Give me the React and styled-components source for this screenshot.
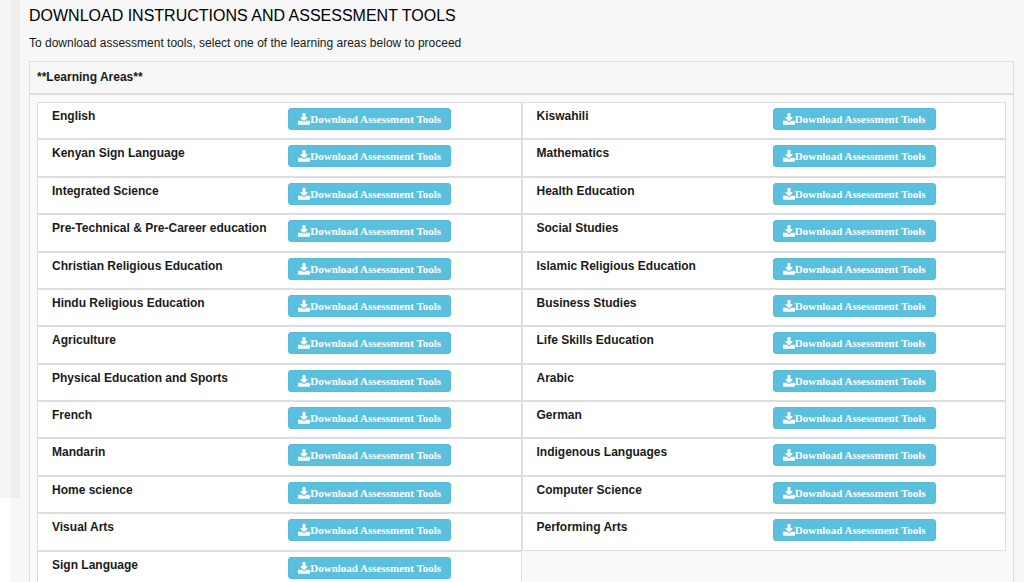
import React from "react";
import styled, { createGlobalStyle } from "styled-components";

const areas = [
  "English",
  "Kiswahili",
  "Kenyan Sign Language",
  "Mathematics",
  "Integrated Science",
  "Health Education",
  "Pre-Technical & Pre-Career education",
  "Social Studies",
  "Christian Religious Education",
  "Islamic Religious Education",
  "Hindu Religious Education",
  "Business Studies",
  "Agriculture",
  "Life Skills Education",
  "Physical Education and Sports",
  "Arabic",
  "French",
  "German",
  "Mandarin",
  "Indigenous Languages",
  "Home science",
  "Computer Science",
  "Visual Arts",
  "Performing Arts",
  "Sign Language",
];

const DownloadIcon = () => (
  <svg width="12" height="12" viewBox="0 -128 1664 1664" aria-hidden="true">
    <path
      fill="currentColor"
      d="M1664 1030v370q0 40-28 68t-68 28H96q-40 0-68-28t-28-68V1030q0-40 28-68t68-28h430l170 150q58 56 136 56t136-56l170-150h430q40 0 68 28t28 68zM1339 507q17 41-14 70l-448 408q-18 19-45 19t-45-19L339 577q-31-29-14-70 17-39 59-39h236V-64q0-26 19-45t45-19h296q26 0 45 19t19 45v532h236q42 0 59 39z"
    />
  </svg>
);

const App = () => {
  return (
    <>
      <GlobalStyle />
      <Sidebar />
      <Main>
        <Title>DOWNLOAD INSTRUCTIONS AND ASSESSMENT TOOLS</Title>
        <Intro>
          To download assessment tools, select one of the learning areas below
          to proceed
        </Intro>
        <Panel>
          <PanelHeading>**Learning Areas**</PanelHeading>
          <PanelBody>
            <AreaList>
              {areas.map((area, i) => (
                <Area key={area}>
                  <AreaName id={`area-${i}`}>{area}</AreaName>
                  <DownloadButton type="button" aria-describedby={`area-${i}`}>
                    <DownloadIcon />
                    Download Assessment Tools
                  </DownloadButton>
                </Area>
              ))}
            </AreaList>
          </PanelBody>
        </Panel>
      </Main>
    </>
  );
};

export default App;

const GlobalStyle = createGlobalStyle`
  * {
    box-sizing: border-box;
  }

  html {
    overflow: hidden;
  }

  body {
    margin: 0;
    background-color: #ffffff;
    color: #1a1a1a;
    font-family: "Liberation Sans", Arial, sans-serif;
    font-size: 12px;
    line-height: 18px;
  }
`;

const Sidebar = styled.aside`
  position: absolute;
  top: 0;
  left: 0;
  width: 20px;
  height: 498px;
  background-color: rgba(0, 0, 0, 0.04);
`;

const Main = styled.main`
  min-height: 100vh;
  margin-left: 11px;
  padding: 4px 10px 10px 18px;
  background-color: #f7f7f7;
`;

const Title = styled.h1`
  margin: 0;
  color: #000000;
  font-size: 16px;
  font-weight: 400;
  line-height: 24px;
`;

const Intro = styled.p`
  margin: 6px 0 9px;
`;

const Panel = styled.section`
  border: 1px solid #dddddd;
  background-color: #f9f9f9;
`;

const PanelHeading = styled.h2`
  margin: 0;
  padding: 6px 7px 7px;
  border-bottom: 2px solid #dddddd;
  background-color: #f7f7f7;
  font-size: 12px;
  font-weight: 700;
  line-height: 18px;
`;

const PanelBody = styled.div`
  padding: 7px 7px 8px;
`;

const AreaList = styled.ul`
  display: grid;
  grid-template-columns: 1fr 1fr;
  grid-auto-rows: 1fr;
  min-height: 486px;
  margin: 0;
  padding: 0;
  list-style: none;
`;

const Area = styled.li`
  display: grid;
  grid-template-columns: 1fr 1fr;
  align-items: start;
  border: 1px solid #dddddd;
  background-color: #ffffff;
`;

const AreaName = styled.span`
  padding: 4px 0 0 14px;
  font-weight: 700;
  line-height: 18px;
`;

const DownloadButton = styled.button`
  display: flex;
  align-items: center;
  justify-self: start;
  height: 22px;
  margin: 5px 0 0 9px;
  padding: 0 9px;
  border: 1px solid #56bcdb;
  border-radius: 3px;
  background-color: #5bc0de;
  color: #ffffff;
  font-family: "Liberation Serif", "Times New Roman", serif;
  font-size: 11px;
  font-weight: 700;
  line-height: 18px;
  white-space: nowrap;
  cursor: pointer;
`;
